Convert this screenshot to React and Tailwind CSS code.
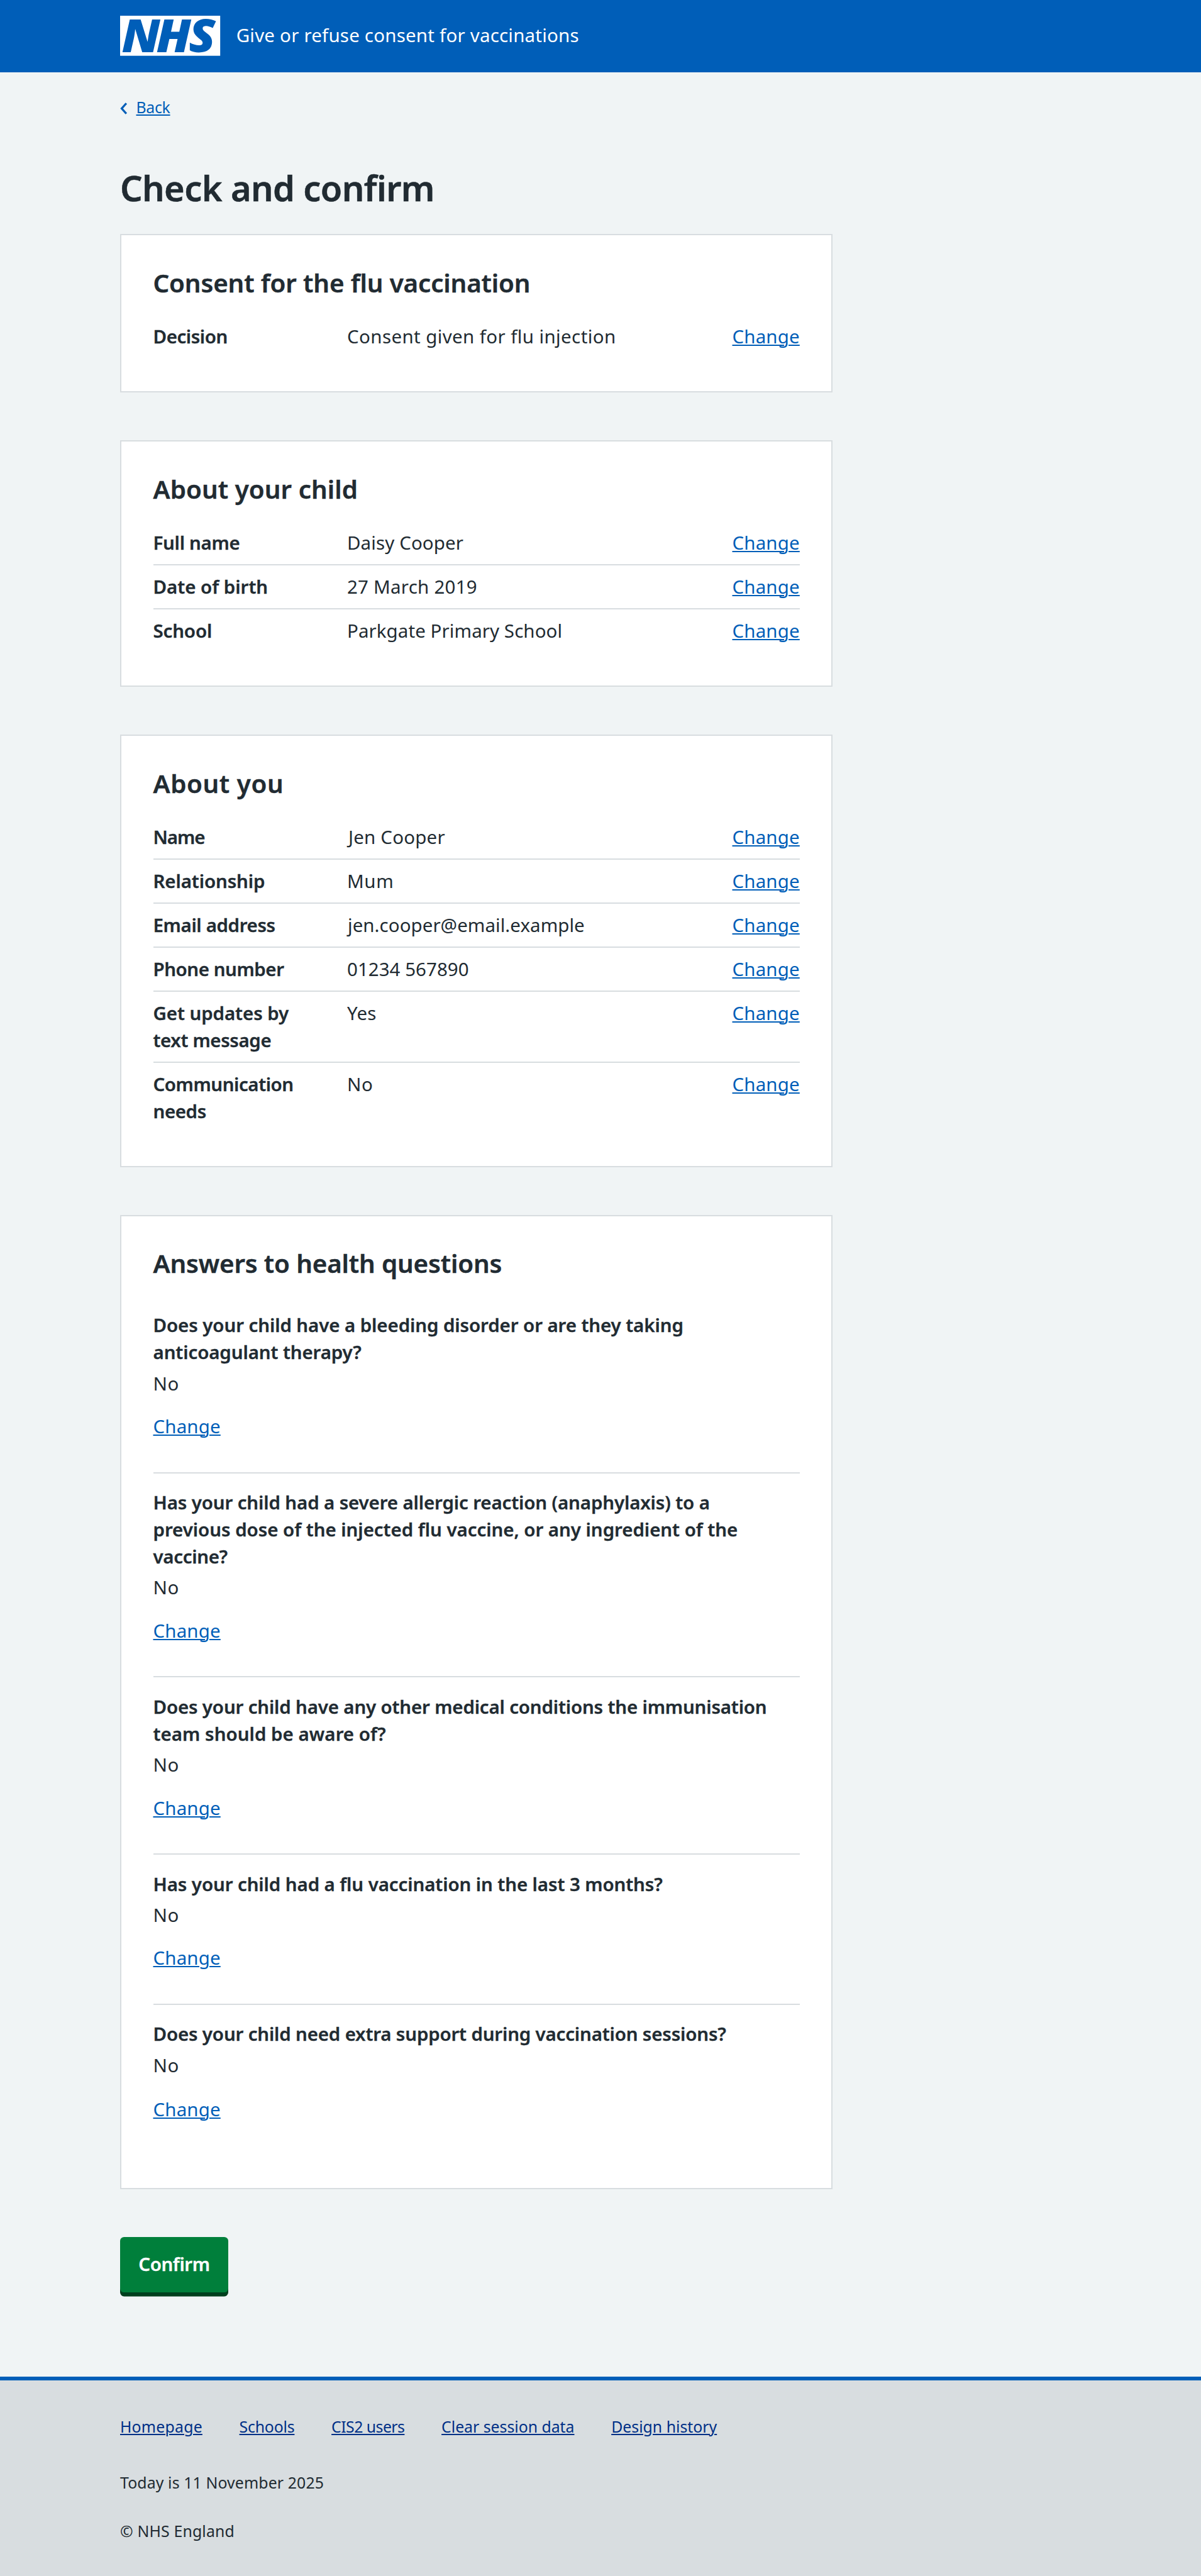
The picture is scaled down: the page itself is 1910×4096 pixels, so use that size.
import React from "react";

const cards = [
  {
    title: "Consent for the flu vaccination",
    tracking: "tracking-[-0.14px]",
    rows: [
      {
        label: [["Decision", "tracking-[-0.44px]"]],
        value: ["Consent given for flu injection", "tracking-[0.4px]"],
      },
    ],
  },
  {
    title: "About your child",
    tracking: "tracking-[0.06px]",
    rows: [
      {
        label: [["Full name", "tracking-[-0.29px]"]],
        value: ["Daisy Cooper", "tracking-[0.11px]"],
      },
      {
        label: [["Date of birth", "tracking-[-0.02px]"]],
        value: ["27 March 2019", "tracking-[0.24px]"],
      },
      {
        label: [["School", "tracking-[-0.16px]"]],
        value: ["Parkgate Primary School", "tracking-[0.08px]"],
      },
    ],
  },
  {
    title: "About you",
    tracking: "tracking-[0.58px]",
    rows: [
      {
        label: [["Name", "tracking-[-1.03px]"]],
        value: ["Jen Cooper", "tracking-[0.2px] pl-[2px]"],
      },
      {
        label: [["Relationship", "tracking-[-0.12px]"]],
        value: ["Mum", "tracking-[0.6px]"],
      },
      {
        label: [["Email address", "tracking-[-0.37px]"]],
        value: ["jen.cooper@email.example", "tracking-[0.05px] pl-[1px]"],
      },
      {
        label: [["Phone number", "tracking-[-0.44px]"]],
        value: ["01234 567890", "tracking-[0.04px]"],
      },
      {
        label: [
          ["Get updates by", "tracking-[-0.08px]"],
          ["text message", "tracking-[-0.38px]"],
        ],
        value: ["Yes", "tracking-[0.19px]"],
      },
      {
        label: [
          ["Communication", "tracking-[-0.44px]"],
          ["needs", "tracking-[-0.4px]"],
        ],
        value: ["No", "tracking-[0.6px]"],
      },
    ],
  },
];

const questions = [
  [
    ["Does your child have a bleeding disorder or are they taking", "tracking-[-0.09px]"],
    ["anticoagulant therapy?", "tracking-[-0.11px]"],
  ],
  [
    ["Has your child had a severe allergic reaction (anaphylaxis) to a", "tracking-[-0.13px]"],
    ["previous dose of the injected flu vaccine, or any ingredient of the", "tracking-[-0.04px]"],
    ["vaccine?", "tracking-[-0.33px]"],
  ],
  [
    ["Does your child have any other medical conditions the immunisation", "tracking-[-0.17px]"],
    ["team should be aware of?", "tracking-[0.03px]"],
  ],
  [["Has your child had a flu vaccination in the last 3 months?", "tracking-[-0.1px]"]],
  [["Does your child need extra support during vaccination sessions?", "tracking-[-0.17px]"]],
];

const footerLinks = [
  ["Homepage", "tracking-[0.22px]"],
  ["Schools", "tracking-[-0.2px]"],
  ["CIS2 users", "tracking-[-0.55px]"],
  ["Clear session data", "tracking-[-0.02px]"],
  ["Design history", "tracking-[0px]"],
];

function Logo() {
  return (
    <svg viewBox="0 0 200 80" className="h-[63.7px] w-[159.2px] shrink-0 overflow-visible" role="img" aria-label="NHS">
      <rect width="200" height="80" fill="#fff" />
      <text
        x="3 67.6 128.3"
        y="72.5"
        transform="scale(1.07 1)"
        fontFamily="'Open Sans', 'Noto Sans', sans-serif"
        fontWeight="800"
        fontStyle="italic"
        fontSize="91"
        fill="#005eb8"
      >
        NHS
      </text>
    </svg>
  );
}

function ChangeLink() {
  return (
    <a
      href="#"
      className="text-[#005eb8] underline decoration-[2px] underline-offset-[2px] tracking-[0.15px]"
    >
      Change
    </a>
  );
}

function Lines({ lines }) {
  return lines.map(([text, tracking]) => (
    <span key={text} className={"block whitespace-nowrap [-webkit-text-stroke:0.3px] " + tracking}>
      {text}
    </span>
  ));
}

function Card({ title, tracking, children }) {
  return (
    <section className="mb-[76.4px] w-[1133.3px] border-2 border-[#d8dde0] bg-white px-[50.5px] pt-[49.5px] pb-[50.5px]">
      <h2
        className={
          "mb-[25.45px] text-[40.35px] leading-[52px] font-semibold whitespace-nowrap [-webkit-text-stroke:0.4px] " +
          tracking
        }
      >
        {title}
      </h2>
      {children}
    </section>
  );
}

export default function App() {
  return (
    <div className="flex min-h-[4096px] w-[1910px] flex-col bg-[#f0f4f5] font-['Noto_Sans',sans-serif] text-[29.49px] leading-[42.97px] text-[#212b32]">
      <header className="flex h-[114.6px] items-center gap-[25.5px] bg-[#005eb8] pl-[191px]">
        <Logo />
        <span className="pb-[2.5px] tracking-[0.21px] whitespace-nowrap text-white">
          Give or refuse consent for vaccinations
        </span>
      </header>

      <main className="flex grow flex-col items-start pl-[191px]">
        <a
          href="#"
          className="mt-[36.6px] flex items-center text-[24.83px] leading-[38px] tracking-[-0.3px] text-[#005eb8]"
        >
          <svg viewBox="0 0 14 24" className="mt-[4px] mr-[14px] h-[19px] w-[11.5px]" fill="none">
            <path d="M12.2 1.6 L3 12 L12.2 22.4" stroke="#005eb8" strokeWidth="4.2" />
          </svg>
          <span className="underline decoration-[2px] underline-offset-[2px]">Back</span>
        </a>

        <h1 className="mt-[74px] mb-[39.2px] text-[55.87px] leading-[70px] font-semibold tracking-[-0.58px] whitespace-nowrap [-webkit-text-stroke:0.5px]">
          Check and confirm
        </h1>

        {cards.map((card) => (
          <Card key={card.title} title={card.title} tracking={card.tracking}>
            <dl>
              {card.rows.map((row) => (
                <div
                  key={row.label[0][0]}
                  className="flex border-b-2 border-[#d8dde0] pt-[12.7px] pb-[12.36px] last:border-transparent"
                >
                  <dt className="w-[30%] font-semibold">
                    <Lines lines={row.label} />
                  </dt>
                  <dd className={"grow whitespace-nowrap " + row.value[1]}>{row.value[0]}</dd>
                  <dd>
                    <ChangeLink />
                  </dd>
                </div>
              ))}
            </dl>
          </Card>
        ))}

        <Card title="Answers to health questions" tracking="tracking-[-0.16px]">
          <dl>
            {questions.map((lines) => (
              <div
                key={lines[0][0]}
                className="group border-b-2 border-[#d8dde0] pt-[25.5px] pb-[50.5px] last:border-transparent"
              >
                <dt className="font-semibold">
                  <Lines lines={lines} />
                </dt>
                <dd className="mt-[6.37px] tracking-[0.6px]">No</dd>
                <dd className="mt-[25.5px] group-last:mt-[27.1px]">
                  <ChangeLink />
                </dd>
              </div>
            ))}
          </dl>
        </Card>

        <button className="h-[87.5px] w-[171.9px] rounded-[6.4px] bg-[#007f3b] pb-[1px] font-semibold tracking-[-0.4px] text-white shadow-[0_6.4px_0_#00401e] [-webkit-text-stroke:0.3px]">
          Confirm
        </button>
      </main>

      <footer className="h-[317.4px] bg-[#d8dde0] text-[24.83px] leading-[38px]">
        <div className="h-[6.4px] bg-[#005eb8]" />
        <nav className="flex gap-[58.7px] pt-[53.8px] pl-[191px] text-[#003087]">
          {footerLinks.map(([text, tracking]) => (
            <a
              key={text}
              href="#"
              className={"whitespace-nowrap underline decoration-[2px] underline-offset-[2px] " + tracking}
            >
              {text}
            </a>
          ))}
        </nav>
        <p className="mt-[51.6px] pl-[191px] tracking-[0.12px]">Today is 11 November 2025</p>
        <p className="mt-[38.4px] pl-[191px] tracking-[0.16px]">© NHS England</p>
      </footer>
    </div>
  );
}
